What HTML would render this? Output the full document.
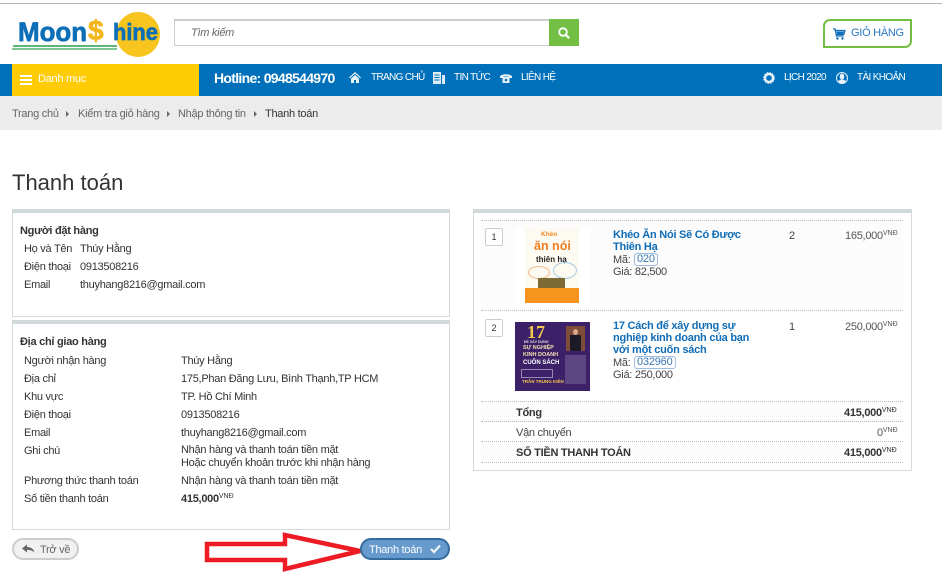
<!DOCTYPE html>
<html><head><meta charset="utf-8"><style>
html,body{margin:0;padding:0;background:#fff}
#p{position:relative;width:942px;height:576px;overflow:hidden;background:#fff;font:11px/14px "Liberation Sans","Noto Sans CJK SC",sans-serif;color:#333}
#p div,#p span.a,#p svg{position:absolute}
.t{white-space:nowrap;margin-top:1px;letter-spacing:-.27px}
.b{font-weight:bold}
.bx{box-sizing:border-box;background:#fff;border:1px solid #d4d9d9;border-top:4px solid #d1dadb}
.n{color:#fff;font-size:10px;line-height:12px;white-space:nowrap;letter-spacing:-.65px}
.d{height:0;border-top:1px dotted #bbb;left:481px;width:422px}
.bl{color:#0f6cb6;font-weight:bold;font-size:11px;line-height:12px;white-space:nowrap;letter-spacing:-.25px}
.bd{height:11px;line-height:11px;border:1px solid #9dbce0;border-radius:3px;padding:0 2px;color:#3c78b4;white-space:nowrap;letter-spacing:-.2px}
.lg{font-weight:bold;white-space:nowrap;-webkit-text-stroke:.7px currentColor;font-family:"Liberation Sans",sans-serif}
sup{font-size:7px;line-height:0;vertical-align:4px;letter-spacing:0}
</style></head><body><div id="p">
<div style="left:0;top:3px;width:942px;height:1px;background:#b5b5b5"></div>

<!-- logo -->
<div style="left:116px;top:12px;width:44px;height:45px;border-radius:50%;background:#f7c51e"></div>
<div class="lg" style="left:18px;top:17px;font-size:27px;line-height:30px;color:#0d6fb8;transform:scaleX(.96);transform-origin:left">Moon</div>
<div class="lg" style="left:88px;top:15px;font-size:28px;line-height:32px;color:#f3b61b;">$</div>
<div class="lg" style="left:113px;top:18px;font-size:23px;line-height:28px;color:#0d6fb8;transform:scaleX(.95);transform-origin:left">hine</div>
<div style="left:13px;top:45px;width:104px;height:2px;background:#5fb57c"></div>
<div style="left:12px;top:48px;width:105px;height:2px;background:#7fc596"></div>

<!-- search -->
<div style="left:174px;top:19px;width:376px;height:27px;box-sizing:border-box;border:1px solid #ccc;border-top:2px solid #ccc;background:#fff"></div>
<div class="t" style="left:191px;top:25px;font-style:italic;color:#666">Tìm kiếm</div>
<div style="left:549px;top:19px;width:30px;height:27px;background:#72bf44"></div>
<svg style="left:557px;top:26px" width="14" height="14" viewBox="0 0 14 14"><circle cx="6" cy="6" r="3.800" fill="none" stroke="#fff" stroke-width="1.800"/><path d="M9 9l3.200 3.200" stroke="#fff" stroke-width="2.200" fill="none"/></svg>

<!-- cart -->
<div style="left:823px;top:19px;width:89px;height:29px;box-sizing:border-box;border:2px solid #72bf44;border-radius:7px 0 7px 0"></div>
<svg style="left:832px;top:28px" width="14" height="13" viewBox="0 0 14 13"><path d="M1 1h2l1.500 7h7M3.500 2.500h9.500l-1.200 4H4.300" fill="none" stroke="#0f6cb6" stroke-width="1.200"/><path d="M4.500 3.500h7.500l-.8 2.500H5z" fill="#0f6cb6"/><circle cx="5.500" cy="10.500" r="1.200" fill="#0f6cb6"/><circle cx="10.500" cy="10.500" r="1.200" fill="#0f6cb6"/></svg>
<div class="t" style="left:851px;top:25px;color:#2a78c0">GIỎ HÀNG</div>

<!-- nav -->
<div style="left:0;top:64px;width:942px;height:32px;background:#0070ba"></div>
<div style="left:12px;top:64px;width:187px;height:32px;background:#ffcb05"></div>
<div style="left:20px;top:75px;width:12px;height:2px;background:#fff"></div>
<div style="left:20px;top:79px;width:12px;height:2px;background:#fff"></div>
<div style="left:20px;top:83px;width:12px;height:2px;background:#fff"></div>
<div class="t" style="left:38px;top:71px;color:#fff">Danh mục</div>
<div class="b" style="left:214px;top:70px;font-size:14px;line-height:16px;color:#fff;white-space:nowrap;letter-spacing:-.7px">Hotline: 0948544970</div>

<svg style="left:349px;top:72px" width="12" height="11" viewBox="0 0 12 11"><path d="M6 0L0 5.500l.8.800L6 1.800l5.200 4.500.8-.8zM2 6.500V11h3V8h2v3h3V6.500L6 3z" fill="#e8f2f9"/></svg>
<div class="n" style="left:371px;top:72px">TRANG CHỦ</div>
<svg style="left:433px;top:72px" width="12" height="12" viewBox="0 0 12 12"><path d="M0 0h8v12H0zM9 3h3v9H9z" fill="#dcecf7"/><path d="M1.500 3h5M1.500 5.500h5M1.500 8h5" stroke="#0070ba"/></svg>
<div class="n" style="left:454px;top:72px">TIN TỨC</div>
<svg style="left:500px;top:73px" width="12" height="10" viewBox="0 0 12 10"><path d="M0 3.500C1 .5 11 .5 12 3.500V5H8.500V3.500h-5V5H0zM2.500 5.500L3.500 4h5l1 1.500V10h-7z" fill="#e8f2f9"/><circle cx="6" cy="7" r="1.300" fill="#0070ba"/></svg>
<div class="n" style="left:521px;top:72px">LIÊN HỆ</div>

<svg style="left:763px;top:72px" width="12" height="12" viewBox="0 0 12 12"><circle cx="6" cy="6" r="4" fill="none" stroke="#e8f2f9" stroke-width="2.400"/><circle cx="6" cy="6" r="5.300" fill="none" stroke="#e8f2f9" stroke-width="1.200" stroke-dasharray="1.500 1.300"/></svg>
<div class="n" style="left:784px;top:72px">LỊCH 2020</div>
<svg style="left:836px;top:72px" width="12" height="12" viewBox="0 0 12 12"><circle cx="6" cy="6" r="5.500" fill="#0070ba" stroke="#e8f2f9"/><ellipse cx="6" cy="4.500" rx="2.300" ry="3" fill="#e8f2f9"/><path d="M2 10c.5-2 2.500-2.500 4-2.500s3.500.5 4 2.500c-2 1.800-6 1.800-8 0z" fill="#e8f2f9"/></svg>
<div class="n" style="left:857px;top:72px">TÀI KHOẢN</div>

<!-- breadcrumb -->
<div style="left:0;top:96px;width:942px;height:34px;background:#ececec"></div>
<div class="t" style="left:12px;top:106px;color:#666">Trang chủ</div>
<div style="left:66px;top:111px;border-left:3px solid #666;border-top:3px solid transparent;border-bottom:3px solid transparent"></div>
<div class="t" style="left:78px;top:106px;color:#666">Kiểm tra giỏ hàng</div>
<div style="left:167px;top:111px;border-left:3px solid #666;border-top:3px solid transparent;border-bottom:3px solid transparent"></div>
<div class="t" style="left:178px;top:106px;color:#666">Nhập thông tin</div>
<div style="left:254px;top:111px;border-left:3px solid #666;border-top:3px solid transparent;border-bottom:3px solid transparent"></div>
<div class="t" style="left:265px;top:106px;color:#333">Thanh toán</div>

<div class="t" style="left:12px;top:169px;font-size:22px;line-height:25px;color:#333;letter-spacing:0">Thanh toán</div>

<!-- left box 1 -->
<div class="bx" style="left:12px;top:209px;width:438px;height:108px"></div>
<div class="t b" style="left:20px;top:223px">Người đặt hàng</div>
<div class="t" style="left:24px;top:241px">Họ và Tên</div><div class="t" style="left:80px;top:241px">Thúy Hằng</div>
<div class="t" style="left:24px;top:259px">Điện thoại</div><div class="t" style="left:80px;top:259px">0913508216</div>
<div class="t" style="left:24px;top:277px">Email</div><div class="t" style="left:80px;top:277px">thuyhang8216@gmail.com</div>

<!-- left box 2 -->
<div class="bx" style="left:12px;top:320px;width:438px;height:210px"></div>
<div class="t b" style="left:20px;top:334px">Địa chỉ giao hàng</div>
<div class="t" style="left:24px;top:353px">Người nhận hàng</div><div class="t" style="left:181px;top:353px">Thúy Hằng</div>
<div class="t" style="left:24px;top:371px">Địa chỉ</div><div class="t" style="left:181px;top:371px">175,Phan Đăng Lưu, Bình Thạnh,TP HCM</div>
<div class="t" style="left:24px;top:389px">Khu vực</div><div class="t" style="left:181px;top:389px">TP. Hồ Chí Minh</div>
<div class="t" style="left:24px;top:407px">Điện thoại</div><div class="t" style="left:181px;top:407px">0913508216</div>
<div class="t" style="left:24px;top:425px">Email</div><div class="t" style="left:181px;top:425px">thuyhang8216@gmail.com</div>
<div class="t" style="left:24px;top:443px">Ghi chú</div><div class="t" style="left:181px;top:443px;line-height:13px">Nhận hàng và thanh toán tiền mặt<br>Hoặc chuyển khoản trước khi nhận hàng</div>
<div class="t" style="left:24px;top:473px">Phương thức thanh toán</div><div class="t" style="left:181px;top:473px">Nhận hàng và thanh toán tiền mặt</div>
<div class="t" style="left:24px;top:491px">Số tiền thanh toán</div><div class="t b" style="left:181px;top:491px">415,000<sup style="font-weight:normal">VNĐ</sup></div>

<!-- buttons -->
<div style="left:12px;top:538px;width:67px;height:22px;box-sizing:border-box;border:2px solid #ccc;border-radius:11px;background:#f1f1f1"></div>
<svg style="left:22px;top:544px" width="13" height="10" viewBox="0 0 13 10"><path d="M0 4.500L5 .5v2.500c4 0 7 2 7.500 6-1.500-2.500-4-3-7.500-3v2.500z" fill="#666"/></svg>
<div class="t" style="left:40px;top:542px;color:#666">Trở về</div>

<!-- arrow -->
<svg style="left:200px;top:530px" width="170" height="46" viewBox="0 0 170 46"><path d="M7 14H85V5L160 21 85 39V30H7Z" fill="#fff" stroke="#ed1c24" stroke-width="4.500"/></svg>

<div style="left:360px;top:538px;width:90px;height:22px;box-sizing:border-box;border:2px solid #336b9f;border-radius:11px;background:#6699cc"></div>
<div class="t" style="left:369px;top:542px;color:#fff">Thanh toán</div>
<svg style="left:430px;top:544px" width="11" height="10" viewBox="0 0 11 10"><path d="M1 5l3 3 6-6.500" fill="none" stroke="#f0f5fa" stroke-width="2.200"/></svg>

<!-- right box -->
<div class="bx" style="left:473px;top:209px;width:439px;height:262px"></div>
<div style="left:481px;top:220px;width:422px;height:91px;background:#fcfcfc"></div>
<div style="left:481px;top:401px;width:422px;height:20px;background:#fcfcfc"></div>
<div style="left:481px;top:442px;width:422px;height:20px;background:#fcfcfc"></div>
<div class="d" style="top:220px"></div>
<div class="d" style="top:310px"></div>
<div class="d" style="top:401px"></div>
<div class="d" style="top:421px"></div>
<div class="d" style="top:441px"></div>
<div class="d" style="top:462px"></div>

<div style="left:485px;top:228px;width:18px;height:18px;box-sizing:border-box;border:1px solid #ccc;border-radius:2px;background:#fff;text-align:center;font-size:9px;line-height:16px;color:#333">1</div>
<div style="left:485px;top:319px;width:18px;height:18px;box-sizing:border-box;border:1px solid #ccc;border-radius:2px;background:#fff;text-align:center;font-size:9px;line-height:16px;color:#333">2</div>

<!-- book 1 -->
<div style="left:515px;top:228px;width:75px;height:75px;background:#fff"></div>
<div style="left:525px;top:228px;width:54px;height:75px;background:#fdfaf2;overflow:hidden">
  <div class="b" style="left:16px;top:3px;font-size:6.500px;line-height:8px;color:#f08a24;white-space:nowrap">Khéo</div>
  <div class="b" style="left:9px;top:12px;font-size:12.500px;line-height:13px;color:#ee7d21;white-space:nowrap">ăn nói</div>
  <div class="b" style="left:11px;top:27px;font-size:8px;line-height:9px;color:#222;white-space:nowrap">thiên hạ</div>
  <div style="left:3px;top:38px;width:20px;height:11px;border:1px solid #f1b98a;border-radius:50%"></div>
  <div style="left:28px;top:34px;width:22px;height:15px;border:1px solid #a8cbe4;border-radius:50%"></div>
  <div style="left:13px;top:50px;width:27px;height:10px;background:#7d6a35"></div>
  <div style="left:0;top:60px;width:54px;height:15px;background:#f7941e"></div>
</div>
<!-- book 2 -->
<div style="left:515px;top:322px;width:75px;height:69px;background:#3c2168;overflow:hidden">
  <div class="b" style="left:12px;top:2px;font:bold 18px/17px 'Liberation Serif',serif;color:#f3c84b;white-space:nowrap">17</div>
  <div class="b" style="left:9px;top:18px;font-size:3.500px;line-height:4px;color:#ddd;white-space:nowrap">ĐỂ XÂY DỰNG</div>
  <div class="b" style="left:8px;top:23px;font-size:5.500px;line-height:7px;color:#f0e0b0;white-space:nowrap">SỰ NGHIỆP<br>KINH DOANH</div>
  <div class="b" style="left:8px;top:38px;font-size:6px;line-height:7px;color:#fff;white-space:nowrap">CUỐN SÁCH</div>
  <div style="left:6px;top:47px;width:30px;height:7px;border:1px solid #9a88b5"></div>
  <div class="b" style="left:7px;top:57px;font-size:4.500px;line-height:5px;color:#f3c84b;white-space:nowrap">TRẦN TRUNG KIÊN</div>
  <div style="left:51px;top:4px;width:19px;height:25px;background:#7d4d3a"></div>
  <div style="left:55px;top:13px;width:11px;height:16px;background:#1d1a28"></div>
  <div style="left:58px;top:7px;width:5px;height:6px;border-radius:50%;background:#d9a98a"></div>
  <div style="left:50px;top:33px;width:21px;height:29px;background:#5d4782"></div>
</div>

<div class="bl" style="left:613px;top:229px">Khéo Ăn Nói Sẽ Có Được<br>Thiên Hạ</div>
<div class="t" style="left:613px;top:253px;color:#444;line-height:13px">Mã:</div>
<div class="bd" style="left:634px;top:253px">020</div>
<div class="t" style="left:613px;top:265px;color:#444;line-height:13px">Giá: 82,500</div>
<div class="t" style="left:789px;top:228px;color:#444">2</div>
<div class="t" style="left:845px;top:228px;color:#555">165,000<sup>VNĐ</sup></div>

<div class="bl" style="left:613px;top:320px">17 Cách để xây dựng sự<br>nghiệp kinh doanh của bạn<br>với một cuốn sách</div>
<div class="t" style="left:613px;top:356px;color:#444;line-height:13px">Mã:</div>
<div class="bd" style="left:634px;top:356px">032960</div>
<div class="t" style="left:613px;top:368px;color:#444;line-height:13px">Giá: 250,000</div>
<div class="t" style="left:789px;top:319px;color:#444">1</div>
<div class="t" style="left:845px;top:319px;color:#555">250,000<sup>VNĐ</sup></div>

<div class="t b" style="left:516px;top:405px;color:#333">Tổng</div>
<div class="t b" style="left:844px;top:405px">415,000<sup style="font-weight:normal">VNĐ</sup></div>
<div class="t" style="left:516px;top:425px;color:#444">Vận chuyển</div>
<div class="t" style="left:877px;top:425px;color:#555">0<sup>VNĐ</sup></div>
<div class="t b" style="left:516px;top:445px">SỐ TIỀN THANH TOÁN</div>
<div class="t b" style="left:844px;top:445px">415,000<sup style="font-weight:normal">VNĐ</sup></div>
</div></body></html>
